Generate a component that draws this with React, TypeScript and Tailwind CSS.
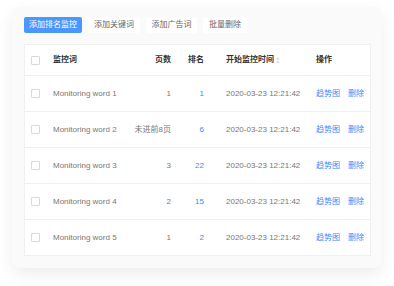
import React from 'react';

type Row = { word: string; pages: string; rank: string; time: string };

const rows: Row[] = [
  { word: 'Monitoring word 1', pages: '1', rank: '1', time: '2020-03-23 12:21:42' },
  { word: 'Monitoring word 2', pages: '未进前8页', rank: '6', time: '2020-03-23 12:21:42' },
  { word: 'Monitoring word 3', pages: '3', rank: '22', time: '2020-03-23 12:21:42' },
  { word: 'Monitoring word 4', pages: '2', rank: '15', time: '2020-03-23 12:21:42' },
  { word: 'Monitoring word 5', pages: '1', rank: '2', time: '2020-03-23 12:21:42' },
];

const cols = 'grid grid-cols-[28px_80px_38px_33px_112px_1fr] items-center';

const Checkbox: React.FC = () => (
  <span className="block w-[9px] h-[9px] border border-[#d9d9d9] rounded-[1px] bg-white ml-[6px]" />
);

const SortIcon: React.FC = () => (
  <svg width="4" height="7" viewBox="0 0 4 7" className="ml-[2px]">
    <path d="M2 0.5L3.5 2.6H0.5Z" fill="#c8c8c8" />
    <path d="M2 6.5L3.5 4.4H0.5Z" fill="#c8c8c8" />
  </svg>
);

const App: React.FC = () => {
  return (
    <div
      className="w-[394px] h-[286px] bg-white pt-[7px] pl-[12px]"
      style={{ fontFamily: '"Liberation Sans", "Noto Sans CJK SC", sans-serif' }}
    >
      <div className="w-[370px] h-[261px] bg-[#fafafa] rounded-[8px] shadow-[0_6px_16px_rgba(0,0,0,0.07)] pt-[10px] px-[12px]">
        <div className="flex gap-[6px] text-[8px] leading-none">
          <button className="w-[58px] h-[16px] bg-[#4a98fe] text-white rounded-[2px]">添加排名监控</button>
          <button className="w-[52px] h-[16px] bg-white text-[#666] rounded-[2px]">添加关键词</button>
          <button className="w-[51px] h-[16px] bg-white text-[#666] rounded-[2px]">添加广告词</button>
          <button className="w-[44px] h-[16px] bg-white text-[#666] rounded-[2px]">批量删除</button>
        </div>

        <div className="mt-[11px] w-[347px] bg-white border border-[#f0f0f0] text-[8px] leading-none">
          <div className={`${cols} h-[30px] text-[#333] font-semibold`}>
            <Checkbox />
            <span>监控词</span>
            <span className="text-right">页数</span>
            <span className="text-right">排名</span>
            <span className="pl-[22px] flex items-center">
              开始监控时间
              <SortIcon />
            </span>
            <span>操作</span>
          </div>
          {rows.map((r) => (
            <div key={r.word} className={`${cols} h-[36px] border-t border-[#efefef] text-[#777]`}>
              <Checkbox />
              <span>{r.word}</span>
              <span className="text-right">{r.pages}</span>
              <span className="text-right text-[#3d8cf5]">{r.rank}</span>
              <span className="pl-[22px]">{r.time}</span>
              <span className="flex gap-[8px] text-[#3d8cf5]">
                <span>趋势图</span>
                <span>删除</span>
              </span>
            </div>
          ))}
        </div>
      </div>
    </div>
  );
};

export default App;
